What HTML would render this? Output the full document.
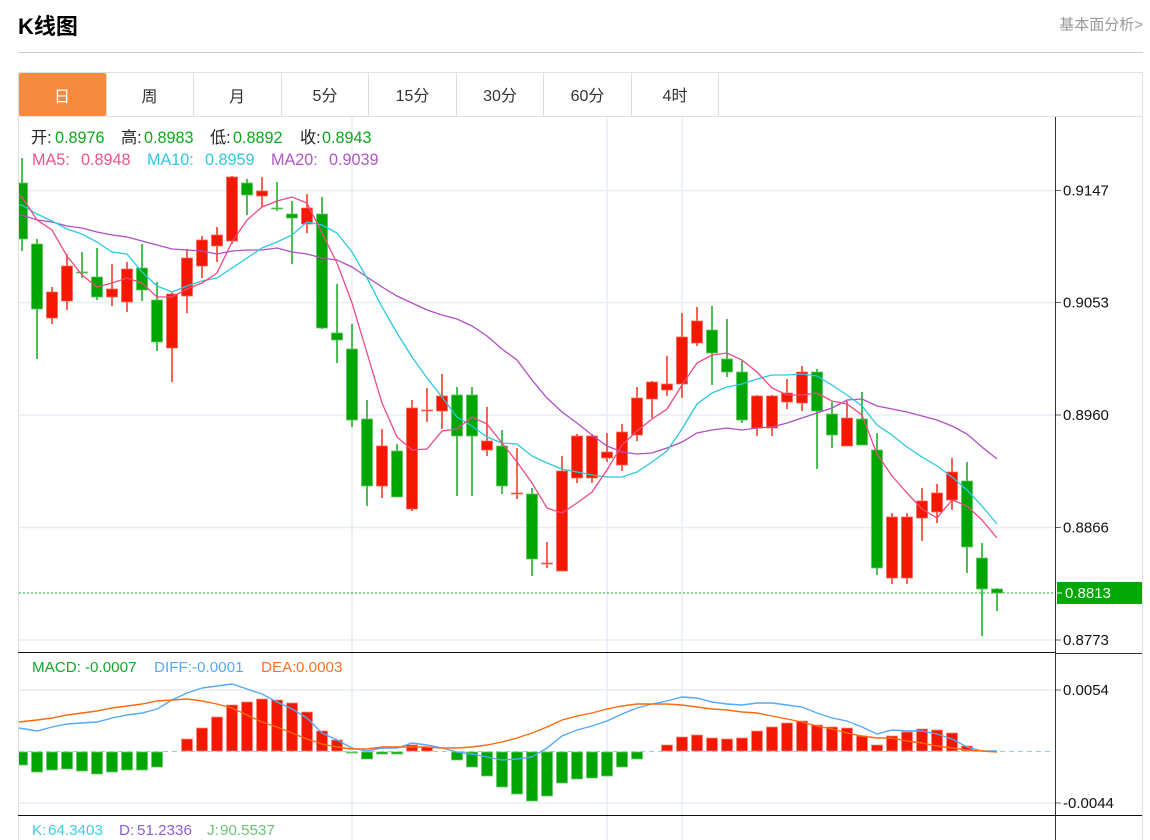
<!DOCTYPE html>
<html lang="zh">
<head>
<meta charset="utf-8">
<title>K线图</title>
<style>
html,body{margin:0;padding:0;background:#fff;width:1150px;height:840px;overflow:hidden}
body{position:relative;font-family:"Liberation Sans","Noto Sans CJK SC",sans-serif}
svg{position:absolute;left:0;top:0}
text{font-family:"Liberation Sans","Noto Sans CJK SC",sans-serif}
</style>
</head>
<body>
<svg width="1150" height="840" viewBox="0 0 1150 840" xmlns="http://www.w3.org/2000/svg">
<defs><clipPath id="c"><rect x="19" y="117" width="1036" height="723"/></clipPath></defs>

<!-- Header -->
<text x="18" y="34" font-size="22" font-weight="700" fill="#000">K线图</text>
<text x="1143" y="29.500" font-size="15" fill="#999" text-anchor="end">基本面分析&gt;</text>
<rect x="18" y="52" width="1125" height="1" fill="#ccc"/>

<!-- Frame -->
<path d="M18.500 72.500H1142.500V840M18.500 72.500V840M18 116.500H1143" fill="none" stroke="#e0e0e0" stroke-width="1"/>
<path d="M106.500 73V116M193.500 73V116M281.500 73V116M368.500 73V116M456.500 73V116M543.500 73V116M631.500 73V116M718.500 73V116" stroke="#ddd" stroke-width="1"/>
<rect x="19" y="73" width="87" height="43" rx="2" fill="#f58b40"/>
<g font-size="16" text-anchor="middle" fill="#333">
<text x="62" y="102" fill="#fff">日</text>
<text x="149.500" y="102">周</text>
<text x="237" y="102">月</text>
<text x="325" y="101">5分</text>
<text x="412.500" y="101">15分</text>
<text x="500" y="101">30分</text>
<text x="587.500" y="101">60分</text>
<text x="675" y="101">4时</text>
</g>

<!-- Grid -->
<path d="M19 190.500H1055M19 302.500H1055M19 415H1055M19 527.500H1055M19 640H1055M19 690H1055M19 803H1055" stroke="#e6eef5" stroke-width="1.500"/>
<path d="M352 117V840M607 117V840M682 117V840" stroke="#e6eef5" stroke-width="1.500"/>

<g clip-path="url(#c)">
<!-- Wicks -->
<path stroke="#12aa1e" stroke-width="1.500" fill="none" d="M22 158V251M37 239V359M82 252V278M97 248V300M142 244V301M157 282V351M247 179V215M277 182V211M292 201V264M322 197V329M337 284V363M352 324V427M367 400V506M397 444V497M457 387V496M472 387V496M502 430V494M532 488V576M712 306V385M727 319V377M742 361V423M817 369V469M832 402V448M862 392V445M877 433V575M967 462V573M982 543V636M997 588V611"/>
<path stroke="#f4301c" stroke-width="1.500" fill="none" d="M52 287V324M67 254V310M112 264V306M127 262V312M172 292V382M187 249V313M202 236V278M217 227V262M232 176V244M262 177V207M307 194V233M382 429V498M412 400V511M427 388V422M442 374V429M487 407V456M517 448V499M547 542V568M562 456V571M577 434V483M592 434V483M607 433V462M622 424V471M637 387V441M652 381V418M667 356V396M682 313V398M697 307V346M757 395V436M772 395V436M787 379V409M802 366V411M847 401V446M892 513V584M907 513V584M922 488V541M937 484V523M952 458V510"/>
<!-- Candle bodies -->
<path fill="#02a604" stroke="#5cc75e" stroke-width="0.800" d="M16.500 183h11v56h-11zM31.500 244h11v65h-11zM76.500 272h11v1h-11zM91.500 277h11v20h-11zM136.500 268h11v22h-11zM151.500 300h11v42h-11zM241.500 183h11v12h-11zM271.500 208h11v1h-11zM286.500 214h11v4h-11zM316.500 214h11v114h-11zM331.500 333h11v7h-11zM346.500 349h11v71h-11zM361.500 419h11v67h-11zM391.500 451h11v46h-11zM451.500 395h11v41h-11zM466.500 395h11v41h-11zM496.500 446h11v40h-11zM526.500 494h11v65h-11zM706.500 330h11v23h-11zM721.500 359h11v13h-11zM736.500 372h11v48h-11zM811.500 372h11v39h-11zM826.500 414h11v21h-11zM856.500 419h11v26h-11zM871.500 450h11v118h-11zM961.500 481h11v66h-11zM976.500 558h11v31h-11zM991.500 589h11v4h-11z"/>
<path fill="#f51800" stroke="#f76a5a" stroke-width="0.800" d="M46.500 292h11v26h-11zM61.500 266h11v35h-11zM106.500 289h11v8h-11zM121.500 269h11v33h-11zM166.500 294h11v54h-11zM181.500 258h11v38h-11zM196.500 240h11v26h-11zM211.500 235h11v11h-11zM226.500 177h11v64h-11zM256.500 191h11v5h-11zM301.500 208h11v16h-11zM376.500 446h11v40h-11zM406.500 408h11v101h-11zM421.500 410h11v1h-11zM436.500 396h11v15h-11zM481.500 441h11v9h-11zM511.500 493h11v1h-11zM541.500 563h11v1h-11zM556.500 471h11v100h-11zM571.500 436h11v42h-11zM586.500 436h11v42h-11zM601.500 452h11v6h-11zM616.500 432h11v33h-11zM631.500 398h11v37h-11zM646.500 382h11v17h-11zM661.500 384h11v6h-11zM676.500 337h11v47h-11zM691.500 321h11v22h-11zM751.500 396h11v32h-11zM766.500 396h11v32h-11zM781.500 393h11v9h-11zM796.500 372h11v31h-11zM841.500 418h11v28h-11zM886.500 517h11v61h-11zM901.500 517h11v61h-11zM916.500 501h11v17h-11zM931.500 493h11v19h-11zM946.500 472h11v28h-11z"/>

<!-- MA lines -->
<polyline fill="none" stroke="#b04fc4" stroke-width="1.300" points="19,215 22,215 37,220 52,222 67,226 82,228 97,232 112,235 127,237 142,241 157,245 172,249 187,250 202,251 217,254 232,251 247,250 262,250 277,248 292,252 307,254 322,258 337,260 352,267 367,277 382,287 397,296 412,303 427,310 442,315 457,319 472,326 487,336 502,349 517,360 532,380 547,398 562,412 577,423 592,435 607,446 622,452 637,454 652,453 667,448 682,442 697,433 712,430 727,428 742,430 757,428 772,427 787,423 802,418 817,413 832,408 847,400 862,399 877,406 892,409 907,412 922,416 937,420 952,426 967,434 982,447 997,459"/>
<polyline fill="none" stroke="#2cc9df" stroke-width="1.300" points="19,205 22,205 37,214 52,221 67,229 82,234 97,242 112,252 127,254 142,272 157,286 172,292 187,286 202,281 217,278 232,268 247,258 262,248 277,242 292,235 307,222 322,225 337,233 352,252 367,278 382,307 397,333 412,357 427,378 442,397 457,417 472,426 487,437 502,443 517,444 532,456 547,463 562,469 577,472 592,475 607,477 622,477 637,472 652,462 667,451 682,429 697,404 712,393 727,387 742,384 757,379 772,375 787,375 802,374 817,376 832,385 847,395 862,406 877,425 892,435 907,447 922,457 937,466 952,477 967,490 982,506 997,524"/>
<polyline fill="none" stroke="#ee4a80" stroke-width="1.300" points="19,196 22,197 37,220 52,230 67,256 82,275 97,287 112,283 127,278 142,283 157,297 172,297 187,289 202,283 217,273 232,242 247,220 262,207 277,201 292,197 307,203 322,233 337,263 352,303 367,353 382,403 397,437 412,450 427,449 442,431 457,429 472,417 487,424 502,443 517,462 532,483 547,508 562,513 577,503 592,492 607,470 622,445 637,431 652,419 667,409 682,385 697,363 712,355 727,353 742,360 757,372 772,388 787,395 802,395 817,393 832,401 847,404 862,415 877,454 892,476 907,493 922,509 937,518 952,500 967,506 982,520 997,538"/>

<!-- MACD -->
<path fill="#02a604" stroke="#6ccb6e" stroke-width="0.800" d="M16.500 752h11v13h-11zM31.500 752h11v20h-11zM46.500 752h11v18h-11zM61.500 752h11v17h-11zM76.500 752h11v19h-11zM91.500 752h11v22h-11zM106.500 752h11v20h-11zM121.500 752h11v18h-11zM136.500 752h11v18h-11zM151.500 752h11v15h-11zM346.500 752h11v1h-11zM361.500 752h11v7h-11zM376.500 752h11v2h-11zM391.500 752h11v2h-11zM451.500 752h11v8h-11zM466.500 752h11v15h-11zM481.500 752h11v24h-11zM496.500 752h11v35h-11zM511.500 752h11v42h-11zM526.500 752h11v49h-11zM541.500 752h11v44h-11zM556.500 752h11v31h-11zM571.500 752h11v27h-11zM586.500 752h11v26h-11zM601.500 752h11v24h-11zM616.500 752h11v15h-11zM631.500 752h11v7h-11z"/>
<path fill="#f51800" stroke="#f88a7e" stroke-width="0.800" d="M181.500 739h11v12h-11zM196.500 728h11v23h-11zM211.500 717h11v34h-11zM226.500 705h11v46h-11zM241.500 702h11v49h-11zM256.500 699h11v52h-11zM271.500 700h11v51h-11zM286.500 703h11v48h-11zM301.500 712h11v39h-11zM316.500 731h11v20h-11zM331.500 740h11v11h-11zM406.500 745h11v6h-11zM421.500 747h11v4h-11zM661.500 745h11v6h-11zM676.500 737h11v14h-11zM691.500 735h11v16h-11zM706.500 738h11v13h-11zM721.500 739h11v12h-11zM736.500 738h11v13h-11zM751.500 731h11v20h-11zM766.500 727h11v24h-11zM781.500 723h11v28h-11zM796.500 721h11v30h-11zM811.500 725h11v26h-11zM826.500 727h11v24h-11zM841.500 728h11v23h-11zM856.500 736h11v15h-11zM871.500 745h11v6h-11zM886.500 736h11v15h-11zM901.500 732h11v19h-11zM916.500 729h11v22h-11zM931.500 730h11v21h-11zM946.500 733h11v18h-11zM961.500 746h11v5h-11z"/>
<path d="M19 751.500H1050" stroke="#8fd0ee" stroke-width="1" stroke-dasharray="5 4" fill="none"/>
<polyline fill="none" stroke="#55a9f5" stroke-width="1.400" points="19,728 37,731 52,727 67,724 82,723 97,722 112,718 127,715 142,713 157,709 172,700 187,693 202,688 217,686 232,684 247,689 262,694 277,702 292,709 307,718 322,733 337,740 352,748 367,751 382,748 397,748 412,743 427,745 442,748 457,752 472,754 487,757 502,760 517,759 532,757 547,748 562,736 577,730 592,726 607,721 622,714 637,708 652,704 667,701 682,697 697,698 712,702 727,704 742,705 757,703 772,703 787,705 802,707 817,713 832,718 847,721 862,727 877,734 892,730 907,731 922,731 937,734 952,739 967,747 982,751 997,751"/>
<polyline fill="none" stroke="#ff6a10" stroke-width="1.400" points="19,722 37,720 52,718 67,715 82,713 97,711 112,708 127,706 142,704 157,701 172,700 187,699 202,701 217,704 232,708 247,715 262,722 277,727 292,733 307,739 322,744 337,747 352,749 367,749 382,747 397,747 412,747 427,747 442,748 457,748 472,747 487,745 502,742 517,738 532,733 547,727 562,720 577,716 592,713 607,709 622,706 637,704 652,704 667,704 682,705 697,707 712,709 727,710 742,712 757,713 772,716 787,719 802,722 817,726 832,729 847,733 862,736 877,738 892,738 907,741 922,743 937,746 952,748 967,750 982,751 997,752"/>
</g>

<!-- Price line -->
<path d="M19 593H1055" stroke="#3dc24a" stroke-width="1.300" stroke-dasharray="2 2" fill="none"/>

<!-- Axis -->
<path d="M1055.500 117V840" stroke="#333" stroke-width="1"/>
<path d="M18 652.500H1055" stroke="#111" stroke-width="1"/>
<path d="M1055 653.500H1142" stroke="#333" stroke-width="1"/>
<path d="M18 815.500H1142" stroke="#111" stroke-width="1"/>
<path d="M1056 190.500h5M1056 302.500h5M1056 415h5M1056 527.500h5M1056 640h5M1056 690h5M1056 803h5" stroke="#666" stroke-width="1"/>
<rect x="1057" y="582" width="85" height="22" fill="#03a805"/>
<path d="M1057 593h5" stroke="#fff" stroke-width="1"/>
<g font-size="15" fill="#111">
<text x="1063" y="195.500">0.9147</text>
<text x="1063" y="307.500">0.9053</text>
<text x="1063" y="420">0.8960</text>
<text x="1063" y="532.500">0.8866</text>
<text x="1065" y="598" fill="#fff">0.8813</text>
<text x="1063" y="645">0.8773</text>
<text x="1063" y="695">0.0054</text>
<text x="1063" y="808">-0.0044</text>
</g>

<!-- Legends -->
<g font-size="16.200">
<g fill="#222">
<text x="31" y="143">开:</text>
<text x="121" y="143">高:</text>
<text x="210" y="143">低:</text>
<text x="300" y="143">收:</text>
</g>
<g fill="#0ca81c">
<text x="55" y="143">0.8976</text>
<text x="144" y="143">0.8983</text>
<text x="233" y="143">0.8892</text>
<text x="322" y="143">0.8943</text>
</g>
<g fill="#ee5488">
<text x="32" y="165">MA5:</text>
<text x="81" y="165">0.8948</text>
</g>
<g fill="#30c8e0">
<text x="147" y="165">MA10:</text>
<text x="205" y="165">0.8959</text>
</g>
<g fill="#b256c6">
<text x="271" y="165">MA20:</text>
<text x="329" y="165">0.9039</text>
</g>
</g>
<g font-size="15.200">
<g fill="#12a82a"><text x="32" y="672">MACD:</text><text x="85" y="672">-0.0007</text></g>
<g fill="#55a9f5"><text x="154" y="672">DIFF:</text><text x="192" y="672">-0.0001</text></g>
<g fill="#ff7020"><text x="261" y="672">DEA:</text><text x="296" y="672">0.0003</text></g>
<g fill="#3ccfe2"><text x="32" y="835">K:</text><text x="48" y="835">64.3403</text></g>
<g fill="#8a5fd0"><text x="119" y="835">D:</text><text x="137" y="835">51.2336</text></g>
<g fill="#6cc07a"><text x="207" y="835">J:</text><text x="220" y="835">90.5537</text></g>
</g>
</svg>
</body>
</html>
